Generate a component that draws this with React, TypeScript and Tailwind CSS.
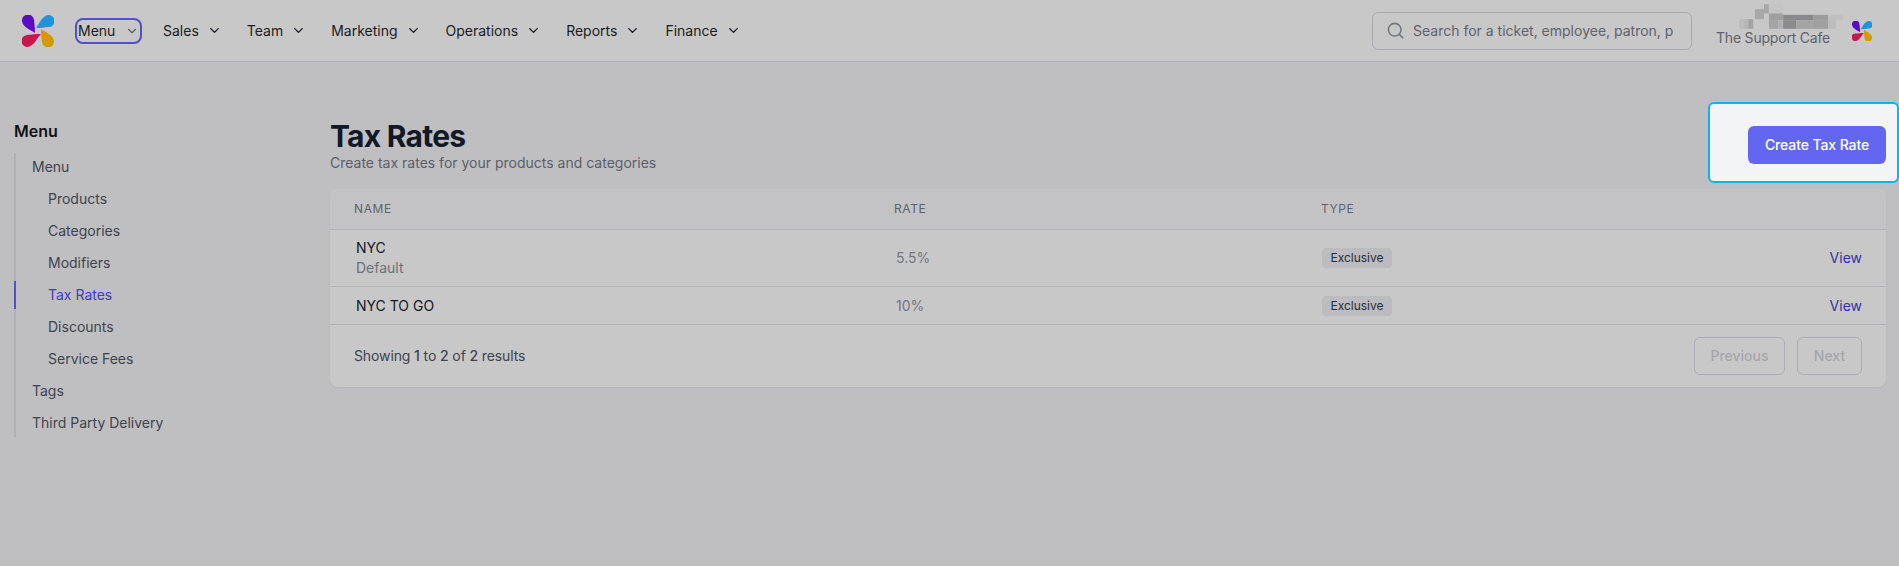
import { ChevronDown, Search } from 'lucide-react'

const navItems = ['Sales', 'Team', 'Marketing', 'Operations', 'Reports', 'Finance']

const subItems = ['Products', 'Categories', 'Modifiers', 'Tax Rates', 'Discounts', 'Service Fees']

// blurred-out account name, coordinates are pixels * 3
const blurBlocks = [
  [48, 27, 27, 30, '#a8a8a8'],
  [0, 57, 16, 29, '#bcbcbc'],
  [16, 57, 12, 29, '#b4b4b4'],
  [28, 57, 15, 29, '#a4a4a4'],
  [75, 12, 15, 28, '#a8a8a8'],
  [90, 12, 43, 28, '#c4c4c4'],
  [90, 40, 43, 20, '#a0a0a0'],
  [133, 44, 90, 16, '#8a8a8c'],
  [223, 44, 45, 16, '#9c9c9c'],
  [268, 44, 45, 16, '#c0c0c0'],
  [90, 60, 28, 26, '#a4a4a4'],
  [118, 60, 15, 26, '#b0b0b0'],
  [133, 60, 40, 26, '#8a8a8c'],
  [173, 60, 50, 26, '#a4a4a4'],
  [223, 60, 45, 26, '#a0a0a0'],
  [268, 60, 25, 26, '#bcbcbc'],
] as const

function Logo({ className }: { className: string }) {
  return (
    <svg viewBox="0 0 32 32" className={className}>
      <path fill="#5c0bc4" d="M13 18C9 15 .5 12 0 6A6 6 0 0 1 12 5C12.5 9 13 14 13 18Z" />
      <path fill="#1f94d8" d="M14 13C17 9 20 1 26 0A6 6 0 0 1 27 12C23 12.500 18 13 14 13Z" />
      <path fill="#c8164f" d="M19 19C15 23 12 31 6 32A6 6 0 0 1 5 20C9 19.500 14 19 19 19Z" />
      <path fill="#d39a06" d="M19 14C23 17 31.500 20 32 26A6 6 0 0 1 20 27C19.500 23 19 18 19 14Z" />
    </svg>
  )
}

function Header() {
  return (
    <header className="flex h-[62px] items-center border-b border-[#b2b2b4] bg-[#c8c8c8]">
      <Logo className="ml-[22px] h-[32px] w-[32px]" />
      <div className="ml-[21px] flex h-[26px] w-[67px] items-center rounded-lg border-2 border-[#4f52c0] pl-[1px] text-sm text-[#1a1c24]">
        <span>Menu</span>
        <ChevronDown className="ml-[10px] h-[14px] w-[14px] text-[#5a5d68]" />
      </div>
      <nav className="ml-[21px] flex items-center text-sm text-[#1a1c24]">
        {navItems.map(item => (
          <div key={item} className="mr-[25px] flex items-center">
            <span>{item}</span>
            <ChevronDown className="ml-[8px] h-[15px] w-[15px] text-[#15171e]" strokeWidth={2.25} />
          </div>
        ))}
      </nav>
      <div className="ml-auto flex h-[38px] w-[320px] items-center rounded-md border border-[#a8a8ae] pl-[13px]">
        <Search className="h-[19px] w-[19px] shrink-0 text-[#74777f]" />
        <div className="ml-[8px] overflow-hidden text-sm whitespace-nowrap text-[#5f626c]">
          Search for a ticket, employee, patron, p
        </div>
      </div>
      <div className="ml-[24px] flex h-full w-[113px] flex-col justify-end pb-[13px] text-sm leading-[20px] tracking-[-0.2px] whitespace-nowrap text-[#5f626c]">
        <svg viewBox="0 0 313 86" className="mb-[-1px] ml-[23px] h-[29px] w-[104px] shrink-0 overflow-visible">
          {blurBlocks.map(([x, y, w, h, fill]) => (
            <rect key={`${x}-${y}`} x={x} y={y} width={w} height={h} fill={fill} />
          ))}
        </svg>
        The Support Cafe
      </div>
      <Logo className="mr-[27px] ml-[23px] h-[20px] w-[20px]" />
    </header>
  )
}

function Sidebar() {
  return (
    <aside className="w-[330px] shrink-0 pt-[57px] pl-[14px]">
      <h2 className="mb-[10px] text-base leading-[24px] font-semibold text-[#0f1118]">Menu</h2>
      <div className="border-l-2 border-[#b2b2b5] text-sm text-[#3e4350]">
        <div className="flex h-[28px] items-center pl-[16px]">Menu</div>
        {subItems.map(item => (
          <div
            key={item}
            className={item === 'Tax Rates'
              ? '-ml-[2px] mt-[4px] flex h-[28px] items-center border-l-2 border-[#4f52c0] pl-[32px] text-[#4338ca]'
              : 'mt-[4px] flex h-[28px] items-center pl-[32px]'}
          >
            {item}
          </div>
        ))}
        <div className="mt-[4px] flex h-[28px] items-center pl-[16px]">Tags</div>
        <div className="mt-[4px] flex h-[28px] items-center pl-[16px]">Third Party Delivery</div>
      </div>
    </aside>
  )
}

function TaxRow({ name, note, rate, height }: { name: string, note?: string, rate: string, height: string }) {
  return (
    <div className={`flex items-center border-t border-[#b4b4b8] text-sm ${height}`}>
      <div className="w-[566px] pl-[26px]">
        <div className="leading-[20px] text-[#15171e]">{name}</div>
        {note && <div className="leading-[20px] text-[#6d7079]">{note}</div>}
      </div>
      <div className="w-[426px] text-[#74777f]">{rate}</div>
      <span className="flex h-[20px] w-[70px] items-center justify-center rounded bg-[#bcbcc0] text-xs text-[#2a2d38]">Exclusive</span>
      <span className="mr-[24px] ml-auto text-[#3730a3]">View</span>
    </div>
  )
}

function Main() {
  return (
    <main className="min-w-0 flex-1 pt-[40px] pr-[13px]">
      <div className="flex items-start justify-between">
        <div className="pt-[16px]">
          <h1 className="text-3xl leading-[36px] font-bold tracking-tight text-[#111827]">Tax Rates</h1>
          <p className="-mt-[1px] text-sm leading-[20px] text-[#5b5e69]">Create tax rates for your products and categories</p>
        </div>
        <div className="-mr-[13px] flex h-[81px] w-[191px] items-center justify-end rounded-md border-2 border-[#0ab5ee] bg-[#f3f4f6] pt-[5px] pr-[11px]">
          <button className="flex h-[38px] w-[138px] items-center justify-center rounded-md bg-[#6366f1] text-sm font-medium tracking-[-0.1px] text-white">
            Create Tax Rate
          </button>
        </div>
      </div>
      <div className="mt-[6px] overflow-hidden rounded-lg bg-[#c8c8c8] shadow-xs">
        <div className="flex h-[40px] items-center bg-[#c3c3c5] text-xs tracking-wider text-[#5f626c] uppercase">
          <div className="w-[564px] pl-[24px]">Name</div>
          <div className="w-[427px]">Rate</div>
          <div>Type</div>
        </div>
        <TaxRow name="NYC" note="Default" rate="5.5%" height="h-[57px]" />
        <TaxRow name="NYC TO GO" rate="10%" height="h-[38px]" />
        <div className="flex h-[63px] items-center border-t border-[#b4b4b8] pr-[24px] pl-[24px] text-sm text-[#3e4350]">
          <span className="tracking-[-0.12px]">Showing <span className="font-medium">1</span> to <span className="font-medium">2</span> of <span className="font-medium">2</span> results</span>
          <button className="ml-auto h-[38px] w-[91px] rounded-md border border-[#adadb3] font-medium text-[#a6a6ab]">Previous</button>
          <button className="ml-[12px] h-[38px] w-[65px] rounded-md border border-[#adadb3] font-medium text-[#a6a6ab]">Next</button>
        </div>
      </div>
    </main>
  )
}

export default function App() {
  return (
    <div className="h-[566px] overflow-hidden bg-[#bfbfc1] font-['Inter',sans-serif]">
      <Header />
      <div className="flex">
        <Sidebar />
        <Main />
      </div>
    </div>
  )
}
